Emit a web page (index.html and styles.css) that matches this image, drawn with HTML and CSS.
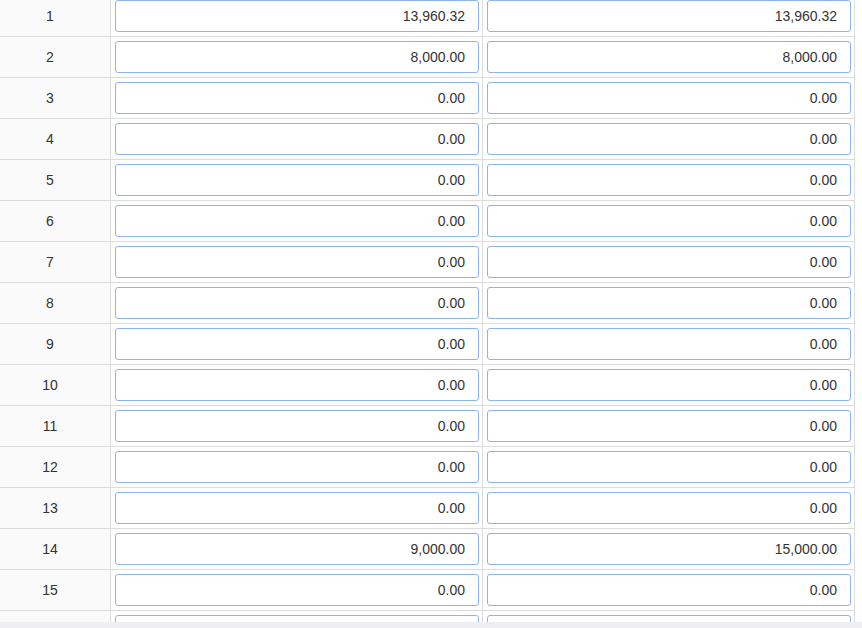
FILE: index.html
```html
<!DOCTYPE html>
<html>
<head>
  <meta charset="UTF-8">
  <link rel="stylesheet" href="styles.css">
</head>
<body>
  <div class="grid-view">
    <div class="grid-body">
      <div class="grid-row"><div class="row-no">1</div><div class="cell"><input class="amount-input" value="13,960.32"></div><div class="cell"><input class="amount-input" value="13,960.32"></div></div>
      <div class="grid-row"><div class="row-no">2</div><div class="cell"><input class="amount-input" value="8,000.00"></div><div class="cell"><input class="amount-input" value="8,000.00"></div></div>
      <div class="grid-row"><div class="row-no">3</div><div class="cell"><input class="amount-input" value="0.00"></div><div class="cell"><input class="amount-input" value="0.00"></div></div>
      <div class="grid-row"><div class="row-no">4</div><div class="cell"><input class="amount-input" value="0.00"></div><div class="cell"><input class="amount-input" value="0.00"></div></div>
      <div class="grid-row"><div class="row-no">5</div><div class="cell"><input class="amount-input" value="0.00"></div><div class="cell"><input class="amount-input" value="0.00"></div></div>
      <div class="grid-row"><div class="row-no">6</div><div class="cell"><input class="amount-input" value="0.00"></div><div class="cell"><input class="amount-input" value="0.00"></div></div>
      <div class="grid-row"><div class="row-no">7</div><div class="cell"><input class="amount-input" value="0.00"></div><div class="cell"><input class="amount-input" value="0.00"></div></div>
      <div class="grid-row"><div class="row-no">8</div><div class="cell"><input class="amount-input" value="0.00"></div><div class="cell"><input class="amount-input" value="0.00"></div></div>
      <div class="grid-row"><div class="row-no">9</div><div class="cell"><input class="amount-input" value="0.00"></div><div class="cell"><input class="amount-input" value="0.00"></div></div>
      <div class="grid-row"><div class="row-no">10</div><div class="cell"><input class="amount-input" value="0.00"></div><div class="cell"><input class="amount-input" value="0.00"></div></div>
      <div class="grid-row"><div class="row-no">11</div><div class="cell"><input class="amount-input" value="0.00"></div><div class="cell"><input class="amount-input" value="0.00"></div></div>
      <div class="grid-row"><div class="row-no">12</div><div class="cell"><input class="amount-input" value="0.00"></div><div class="cell"><input class="amount-input" value="0.00"></div></div>
      <div class="grid-row"><div class="row-no">13</div><div class="cell"><input class="amount-input" value="0.00"></div><div class="cell"><input class="amount-input" value="0.00"></div></div>
      <div class="grid-row"><div class="row-no">14</div><div class="cell"><input class="amount-input" value="9,000.00"></div><div class="cell"><input class="amount-input" value="15,000.00"></div></div>
      <div class="grid-row"><div class="row-no">15</div><div class="cell"><input class="amount-input" value="0.00"></div><div class="cell"><input class="amount-input" value="0.00"></div></div>
      <!-- 下一行只露出输入框顶边 -->
      <div class="grid-row"><div class="row-no"></div><div class="cell"><input class="amount-input"></div><div class="cell"><input class="amount-input"></div></div>
    </div>
  </div>
  <div class="scroll-track"></div>
</body>
</html>
```

FILE: styles.css
```css
body {
  margin: 0;
  background: #fff;
  font-family: "Liberation Sans", Arial, sans-serif;
  color: #333;
}

.grid-view {
  height: 622px;
  overflow: hidden;
}

/* 首行被滚动了一点 */
.grid-body {
  margin-top: -4px;
  width: 855px;
}

.grid-row {
  display: grid;
  grid-template-columns: 111px 372px 372px;
  height: 40px;
  border-bottom: 1px solid #dcdcdc;
}

.row-no {
  background: #fafafa;
  border-right: 1px solid #dcdcdc;
  display: flex;
  align-items: center;
  justify-content: center;
  padding-right: 10px;
  font-size: 14px;
  color: #333;
}

.cell {
  border-right: 1px solid #dcdcdc;
  padding: 4px 3px 4px 4px;
}

.amount-input {
  display: block;
  box-sizing: border-box;
  width: 364px;
  height: 32px;
  margin: 0;
  padding: 0 13px 0 8px;
  border: 1px solid #8db4ee;
  border-radius: 3px;
  background: #fff;
  text-align: right;
  font-family: "Liberation Sans", Arial, sans-serif;
  font-size: 14px;
  color: #333;
  outline: none;
}

.scroll-track {
  height: 6px;
  background: #efeff3;
}
```
